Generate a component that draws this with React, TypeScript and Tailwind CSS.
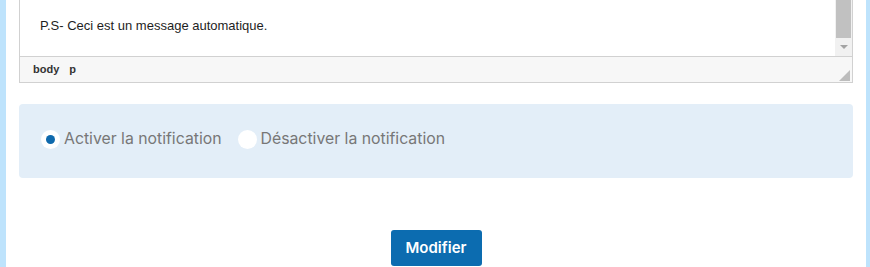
export default function App() {
  return (
    <div className="h-[267px] overflow-hidden bg-[#bee3fc] pl-[6px] pr-[4px]">
      <div className="h-full bg-white px-[13px]">
        {/* Editor */}
        <div className="border border-t-0 border-[#d1d1d1]">
          <div className="flex h-[56px]">
            <div className="flex-1 pl-[20px] pt-[16px] font-['Liberation_Sans',Arial,sans-serif] text-[13px] text-[#1e1e1e]">
              P.S- Ceci est un message automatique.
            </div>
            <div className="flex w-[17px] flex-col bg-[#f1f1f1] px-[1px]">
              <div className="h-[38px] bg-[#c1c1c1]"></div>
              <div className="flex flex-1 items-center justify-center">
                <svg width="8" height="5" viewBox="0 0 8 5">
                  <path d="M0 0 L8 0 L4 4 Z" fill="#a3a3a3" />
                </svg>
              </div>
            </div>
          </div>
          <div className="flex h-[26px] items-center justify-between border-t border-[#d1d1d1] bg-[#f7f7f7] pl-[13px] pr-[2px] font-['Liberation_Sans',Arial,sans-serif] text-[11px] font-bold text-[#333]">
            <div className="flex gap-[10px]">
              <span>body</span>
              <span>p</span>
            </div>
            <svg width="11" height="11" viewBox="0 0 11 11" className="mt-[12px]">
              <path d="M11 0 L11 11 L0 11 Z" fill="#bdbdbd" />
            </svg>
          </div>
        </div>

        {/* Notification choice */}
        <div className="mt-[21px] flex h-[74px] items-center gap-[16px] rounded-[4px] bg-[#e3eef8] px-[22px] pb-[4px] font-['Inter',sans-serif] text-[15.8px] text-[#777]">
          <label className="flex items-center gap-[4px]">
            <span className="flex h-[19px] w-[19px] items-center justify-center rounded-full bg-white">
              <span className="h-[9px] w-[9px] rounded-full bg-[#0e69ad]"></span>
            </span>
            Activer la notification
          </label>
          <label className="flex items-center gap-[4px]">
            <span className="h-[19px] w-[19px] rounded-full bg-white"></span>
            Désactiver la notification
          </label>
        </div>

        {/* Submit */}
        <div className="mt-[52px] flex justify-center">
          <button className="h-[36px] w-[91px] rounded-[3px] bg-[#0c6cb0] font-['Inter',sans-serif] text-[15px] font-semibold text-white">
            Modifier
          </button>
        </div>
      </div>
    </div>
  );
}
